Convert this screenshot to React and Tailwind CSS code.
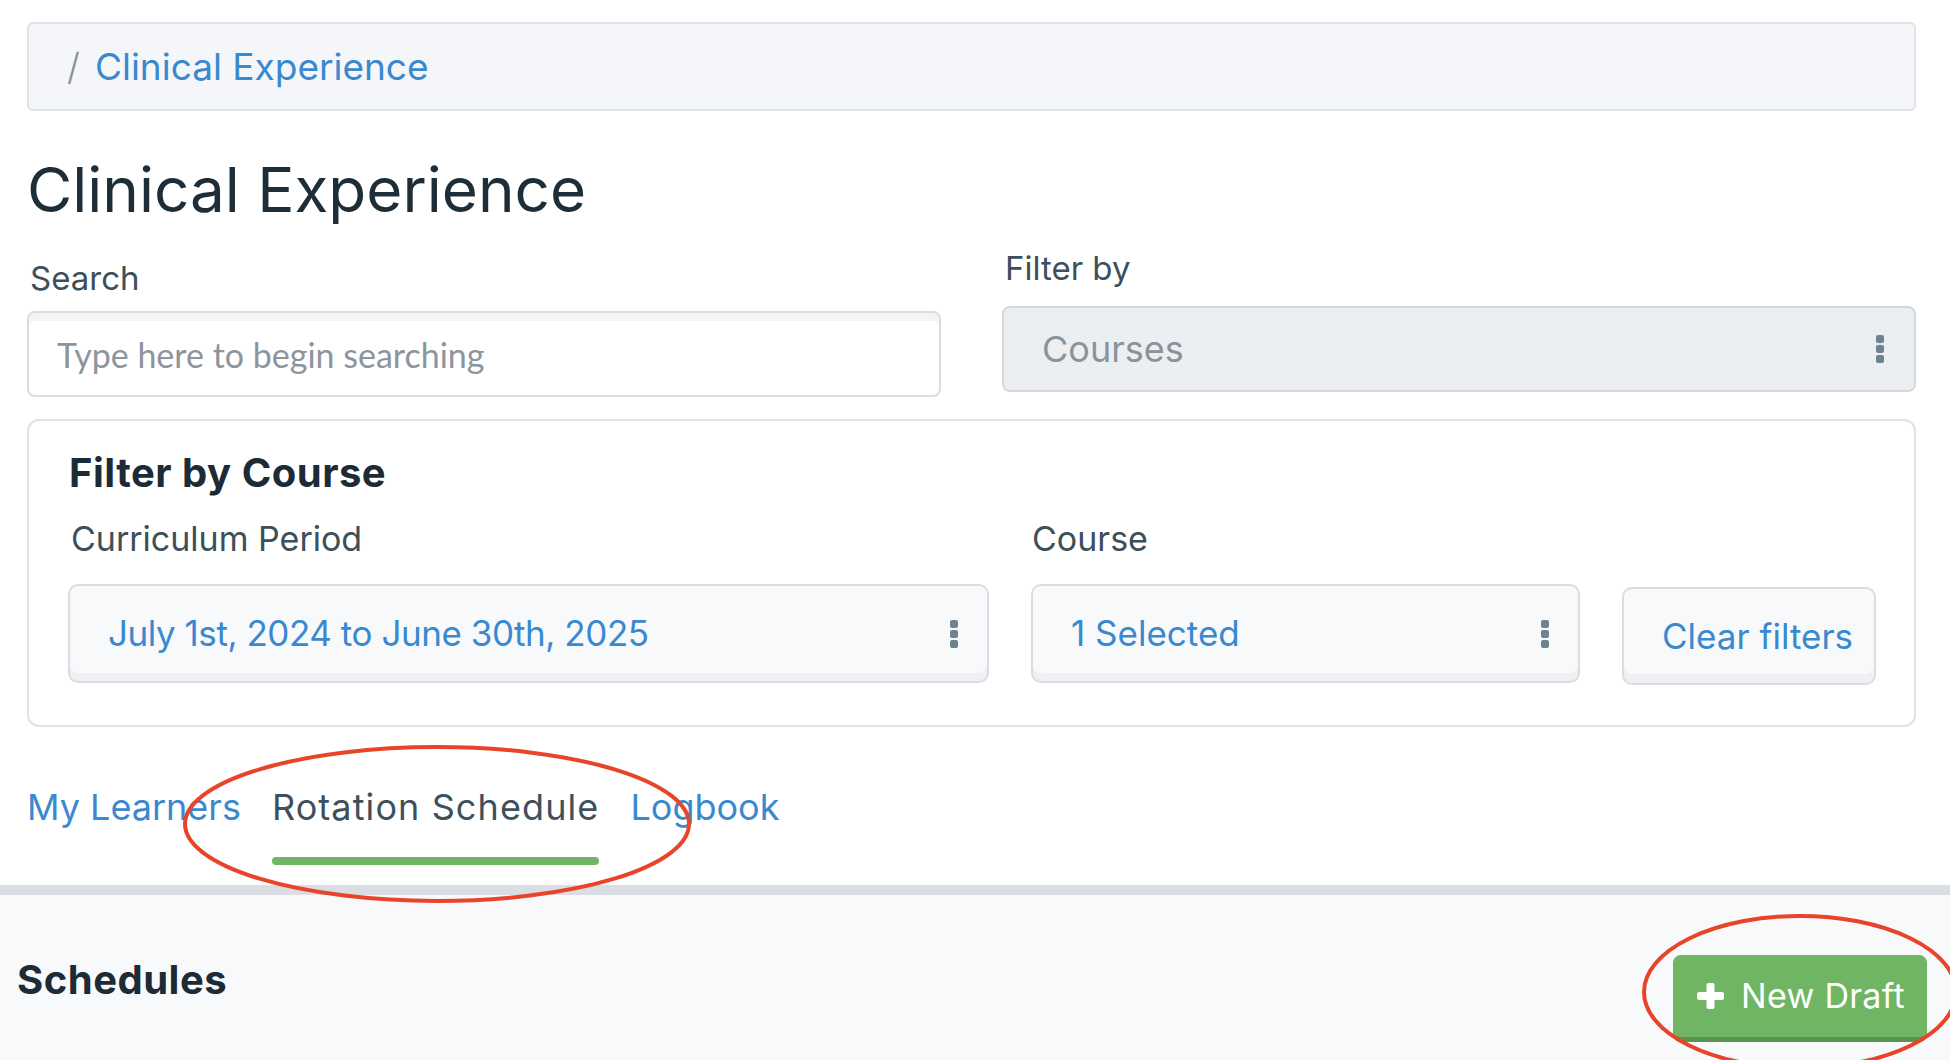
import React from "react";

function Kebab() {
  return (
    <div className="flex flex-col gap-[2px]">
      <span className="block w-[8px] h-[8px] rounded-[2px] bg-[#6d838f]" />
      <span className="block w-[8px] h-[8px] rounded-[2px] bg-[#6d838f]" />
      <span className="block w-[8px] h-[8px] rounded-[2px] bg-[#6d838f]" />
    </div>
  );
}

function Dropdown({ children, tight }) {
  return (
    <div className="mt-[28px] h-[99px] rounded-[10px] border-2 border-[#d9dde2] bg-[#f8f9fb] shadow-[inset_0_-8px_0_#eef0f3] flex items-center justify-between pl-[38px] pr-[29px]">
      <span className={tight ? "text-[35px] leading-none tracking-[-0.45px] text-[#3a89cf]" : "text-[35px] leading-none text-[#3a89cf]"}>
        {children}
      </span>
      <Kebab />
    </div>
  );
}

export default function App() {
  return (
    <div className="relative w-[1950px] h-[1060px] overflow-hidden bg-white flex flex-col font-['Inter',sans-serif]">
      <div className="pl-[27px] pr-[34px] pb-[20px]">
        <nav className="mt-[22px] h-[89px] rounded-[6px] border-2 border-[#dfe2e6] bg-[#f5f6f9] flex items-center pl-[38px]">
          <span className="text-[37px] leading-none text-[#8a9097] font-light">/</span>
          <a className="ml-[15px] text-[37px] leading-none text-[#3a89cf]">Clinical Experience</a>
        </nav>

        <h1 className="mt-[48px] text-[62px] leading-none font-normal text-[#1d2e39]">Clinical Experience</h1>

        <div className="mt-[31px] grid grid-cols-2 gap-x-[61px]">
          <div className="pt-[10px]">
            <label className="block pl-[3px] text-[33px] leading-none text-[#3c4f5a]">Search</label>
            <input
              placeholder="Type here to begin searching"
              className="mt-[16px] w-full h-[86px] rounded-[8px] border-2 border-[#dadee3] bg-white shadow-[inset_0_8px_0_#f2f4f6] pl-[28px] font-['Lato',sans-serif] text-[34px] text-[#3c4f5a] placeholder:text-[#8c959e] outline-none"
            />
          </div>
          <div>
            <label className="block pl-[3px] text-[33px] leading-none text-[#3c4f5a]">Filter by</label>
            <div className="mt-[21px] h-[86px] rounded-[8px] border-2 border-[#d4d8dd] bg-[#eceff2] flex items-center justify-between pl-[38px] pr-[30px]">
              <span className="text-[36px] leading-none text-[#8a9399]">Courses</span>
              <Kebab />
            </div>
          </div>
        </div>

        <section className="mt-[22px] rounded-[12px] border-2 border-[#dfe2e6] pt-[32px] pb-[40px] pl-[39px] pr-[38px]">
          <h2 className="pl-[1px] text-[40px] leading-none font-bold tracking-[0.5px] text-[#1c2b36]">Filter by Course</h2>
          <div className="mt-[29px] flex items-start gap-[42px]">
            <div className="w-[921px]">
              <div className="pl-[3px] text-[34px] leading-none text-[#3c4f5a]">Curriculum Period</div>
              <Dropdown tight>July 1st, 2024 to June 30th, 2025</Dropdown>
            </div>
            <div className="w-[549px]">
              <div className="pl-[1px] text-[34px] leading-none text-[#3c4f5a]">Course</div>
              <Dropdown>1 Selected</Dropdown>
            </div>
            <button className="mt-[65px] w-[254px] h-[98px] rounded-[10px] border-2 border-[#d9dde2] bg-[#f8f9fb] shadow-[inset_0_-9px_0_#eef0f3] flex items-center pl-[38px] text-[35px] leading-none text-[#3a89cf]">
              Clear filters
            </button>
          </div>
        </section>

        <div className="mt-[62px] flex items-start gap-[31px]">
          <a className="text-[36px] leading-none text-[#3a89cf]">My Learners</a>
          <div className="flex flex-col">
            <span className="text-[36px] leading-none tracking-[1.1px] text-[#3d505b]">Rotation Schedule</span>
            <div className="mt-[32px] h-[8px] rounded-full bg-[#71b666]" />
          </div>
          <a className="text-[36px] leading-none text-[#3a89cf]">Logbook</a>
        </div>
      </div>

      <div className="h-[10px] bg-[#dadde1]" />

      <div className="flex-1 bg-[#f8f9fb] flex justify-between items-start pl-[17px] pr-[23px] pt-[60px]">
        <h3 className="mt-[5px] text-[40px] leading-none font-bold tracking-[0.5px] text-[#1c2b36]">Schedules</h3>
        <button className="w-[254px] h-[87px] rounded-[8px] bg-[#6fb563] border-b-[5px] border-[#5a9350] flex items-center pl-[24px] gap-[17px] text-white text-[34px] leading-none tracking-[0.3px]">
          <svg width="27" height="26" viewBox="0 0 27 26">
            <rect x="9.5" y="0" width="8" height="26" rx="2" fill="white" />
            <rect x="0" y="9" width="27" height="8" rx="2" fill="white" />
          </svg>
          <span>New Draft</span>
        </button>
      </div>

      <svg className="absolute inset-0 pointer-events-none" width="1950" height="1060">
        <ellipse cx="437" cy="824" rx="252" ry="77" fill="none" stroke="#e8442a" strokeWidth="4" />
        <ellipse cx="1800" cy="992" rx="156" ry="76" fill="none" stroke="#e8442a" strokeWidth="4" />
      </svg>
    </div>
  );
}
